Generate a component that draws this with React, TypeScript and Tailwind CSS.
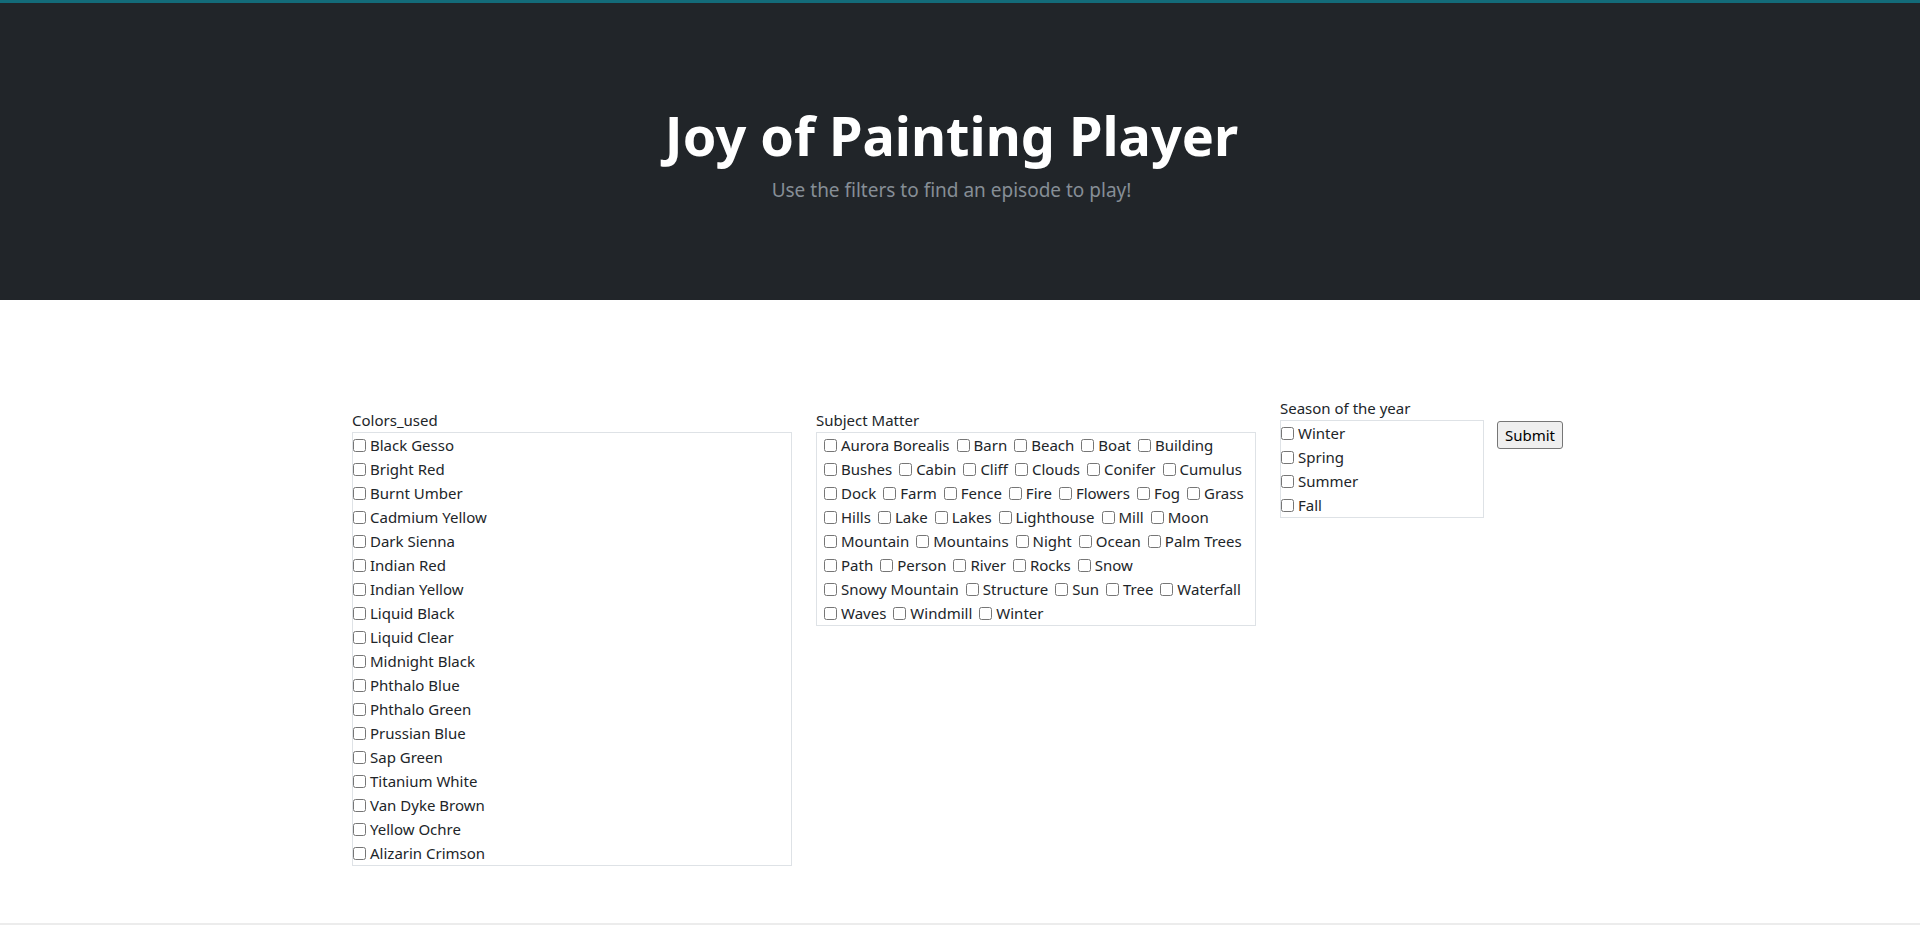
import { useState } from "react";

const colors = [
  "Black Gesso",
  "Bright Red",
  "Burnt Umber",
  "Cadmium Yellow",
  "Dark Sienna",
  "Indian Red",
  "Indian Yellow",
  "Liquid Black",
  "Liquid Clear",
  "Midnight Black",
  "Phthalo Blue",
  "Phthalo Green",
  "Prussian Blue",
  "Sap Green",
  "Titanium White",
  "Van Dyke Brown",
  "Yellow Ochre",
  "Alizarin Crimson",
];

// subject rows, kept as the reference wraps them
const subjects = [
  ["Aurora Borealis", "Barn", "Beach", "Boat", "Building"],
  ["Bushes", "Cabin", "Cliff", "Clouds", "Conifer", "Cumulus"],
  ["Dock", "Farm", "Fence", "Fire", "Flowers", "Fog", "Grass"],
  ["Hills", "Lake", "Lakes", "Lighthouse", "Mill", "Moon"],
  ["Mountain", "Mountains", "Night", "Ocean", "Palm Trees"],
  ["Path", "Person", "River", "Rocks", "Snow"],
  ["Snowy Mountain", "Structure", "Sun", "Tree", "Waterfall"],
  ["Waves", "Windmill", "Winter"],
];

const seasons = ["Winter", "Spring", "Summer", "Fall"];

function Check({ label, checked, onToggle }: { label: string; checked: boolean; onToggle: () => void }) {
  return (
    <label className="flex items-center gap-1 h-6 whitespace-nowrap">
      <input type="checkbox" className="w-[13px] h-[13px]" checked={checked} onChange={onToggle} />
      <span>{label}</span>
    </label>
  );
}

export default function App() {
  const [picked, setPicked] = useState<Record<string, boolean>>({});
  const toggle = (k: string) => setPicked((p) => ({ ...p, [k]: !p[k] }));

  return (
    <div className="min-h-[2620px] bg-white text-[#212529] font-['Noto_Sans',sans-serif] text-[15px] leading-6">
      <header className="h-[300px] bg-[#212529] border-t-[3px] border-[#136b79] pt-[101px] pr-[17px] text-center">
        <h1 className="text-white font-bold text-[54px] leading-[62px]">Joy of Painting Player</h1>
        <p className="mt-[10px] text-[#868e96] text-[19px] leading-7">Use the filters to find an episode to play!</p>
      </header>

      <form className="flex justify-center items-start pt-[108px] pr-[5px] gap-6" onSubmit={(e) => e.preventDefault()}>
        <div className="w-[440px]">
          <div>Colors_used</div>
          <div className="border border-[#dee2e6]">
            {colors.map((c) => (
              <Check key={c} label={c} checked={!!picked["c-" + c]} onToggle={() => toggle("c-" + c)} />
            ))}
          </div>
        </div>

        <div className="w-[440px]">
          <div>Subject Matter</div>
          <div className="border border-[#dee2e6] pl-[7px]">
            {subjects.map((row, i) => (
              <div key={i} className="flex gap-[7px]">
                {row.map((s) => (
                  <Check key={s} label={s} checked={!!picked["s-" + s]} onToggle={() => toggle("s-" + s)} />
                ))}
              </div>
            ))}
          </div>
        </div>

        <div className="flex items-start gap-[13px] -mt-3">
          <div className="w-[204px]">
            <div>Season of the year</div>
            <div className="border border-[#dee2e6]">
              {seasons.map((s) => (
                <Check key={s} label={s} checked={!!picked["w-" + s]} onToggle={() => toggle("w-" + s)} />
              ))}
            </div>
          </div>
          <button
            type="submit"
            className="mt-[25px] h-7 px-[6px] w-[66px] bg-[#efefef] border border-[#767676] rounded-[3px] text-black text-[15px]"
          >
            Submit
          </button>
        </div>
      </form>

      <div className="mt-[57px] h-[2px] bg-[#ececec]" />
    </div>
  );
}
